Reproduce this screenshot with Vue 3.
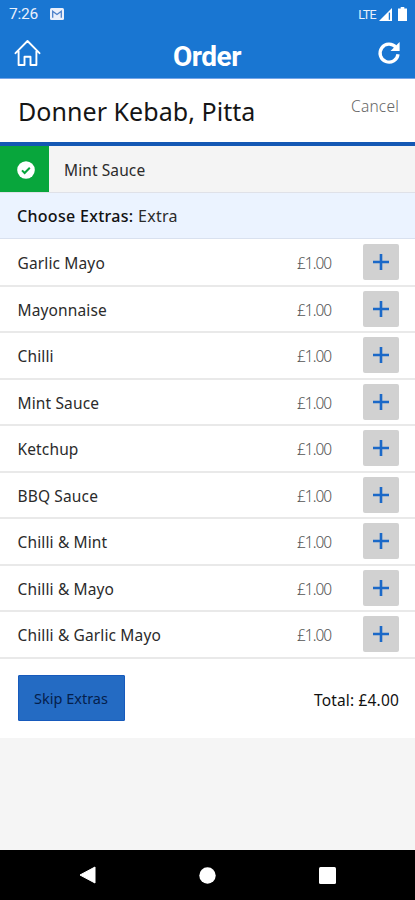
<script setup>
const extras = [
  { name: 'Garlic Mayo', price: '£1.00' },
  { name: 'Mayonnaise', price: '£1.00' },
  { name: 'Chilli', price: '£1.00' },
  { name: 'Mint Sauce', price: '£1.00' },
  { name: 'Ketchup', price: '£1.00' },
  { name: 'BBQ Sauce', price: '£1.00' },
  { name: 'Chilli & Mint', price: '£1.00' },
  { name: 'Chilli & Mayo', price: '£1.00' },
  { name: 'Chilli & Garlic Mayo', price: '£1.00' },
]
</script>

<template>
  <div class="screen">
    <div class="status">
      <span class="time">7:26</span>
      <svg class="mail" width="14" height="12" viewBox="0 0 14 12">
        <rect width="14" height="12" rx="1.5" fill="#e9effb" />
        <path d="M2.7 9.7V3.2L7 6.5l4.3-3.3v6.5" fill="none" stroke="#4b7fc9" stroke-width="1.3" />
      </svg>
      <span class="lte">LTE</span>
      <svg class="signal" width="13" height="13" viewBox="0 0 13 13">
        <path d="M13 0v13H0z" fill="#fff" />
        <path d="M10.4 4.6v7.2" stroke="#1976d2" stroke-width="1.3" />
      </svg>
      <svg class="battery" width="9" height="14" viewBox="0 0 9 14">
        <path d="M2.7 0h3.6v1.6H9V14H0V1.6h2.7z" fill="#fff" />
      </svg>
    </div>

    <header class="bar">
      <svg class="home" width="27" height="28" viewBox="0 0 27 28">
        <path d="M1.5 14.2L13.5 2l12 12.2M4.6 12v14h5.9v-8.3h6V26h5.9V12" fill="none" stroke="#fff" stroke-width="1.9" stroke-linejoin="round" stroke-linecap="round" />
      </svg>
      <h1>Order</h1>
      <svg class="refresh" width="24" height="24" viewBox="0 0 24 24">
        <path d="M18.9 6.3A9 9 0 1 0 21 13.2" fill="none" stroke="#fff" stroke-width="3.3" />
        <path d="M22.6 1v9.1h-9.1z" fill="#fff" />
      </svg>
    </header>

    <section class="title">
      <h2>Donner Kebab, Pitta</h2>
      <span class="cancel">Cancel</span>
    </section>

    <div class="chosen">
      <div class="tick">
        <svg width="18" height="18" viewBox="0 0 18 18">
          <circle cx="9" cy="9" r="8.8" fill="#fff" />
          <path d="M5 9.4l2.6 2.6 5.2-5.3" fill="none" stroke="#08a63c" stroke-width="2" />
        </svg>
      </div>
      <span>Mint Sauce</span>
    </div>

    <div class="choose"><span><b>Choose Extras:</b> Extra</span></div>

    <ul class="list">
      <li v-for="item in extras" :key="item.name">
        <span class="name">{{ item.name }}</span>
        <span class="price">{{ item.price }}</span>
        <button class="add" :aria-label="item.name">
          <svg width="16" height="16" viewBox="0 0 16 16">
            <path d="M8 0v16M0 8h16" stroke="#1b69c8" stroke-width="2.6" />
          </svg>
        </button>
      </li>
    </ul>

    <footer class="foot">
      <button class="skip">Skip Extras</button>
      <span class="total">Total: £4.00</span>
    </footer>

    <nav class="nav">
      <svg width="17" height="18" viewBox="0 0 17 18"><path d="M16 1v16L1 9z" fill="#fff" stroke="#fff" stroke-linejoin="round" /></svg>
      <svg width="17" height="17" viewBox="0 0 17 17"><circle cx="8.5" cy="8.5" r="8.2" fill="#fff" /></svg>
      <svg width="17" height="17" viewBox="0 0 17 17"><rect width="17" height="17" rx="1.5" fill="#fff" /></svg>
    </nav>
  </div>
</template>

<style>
body {
  background: #f5f5f5;
}
</style>

<style scoped>
.screen {
  width: 415px;
  height: 900px;
  display: flex;
  flex-direction: column;
  background: #f5f5f5;
  font-family: "Noto Sans", sans-serif;
  font-size: 15.5px;
  color: #2b2b2b;
  overflow: hidden;
}
.screen * {
  box-sizing: border-box;
}
.status {
  height: 28px;
  flex: none;
  display: flex;
  align-items: center;
  padding: 0 8px 0 9px;
  background: #1976d2;
  font-family: Roboto, sans-serif;
  color: #e9f0fc;
}
.time {
  width: 29px;
  font-size: 15.5px;
  font-weight: 400;
  letter-spacing: -0.2px;
}
.mail {
  margin-left: 12px;
}
.lte {
  margin-left: auto;
  font-size: 12.5px;
  letter-spacing: -0.6px;
}
.signal {
  margin-left: 3px;
}
.battery {
  margin-left: 6px;
}
.bar {
  height: 51px;
  flex: none;
  display: grid;
  grid-template-columns: 27px 1fr 24px;
  padding: 0 14px;
  background: #1976d2;
  border-bottom: 1px solid #75a5e8;
}
.home {
  margin-top: 11px;
}
.refresh {
  margin-top: 13px;
}
h1 {
  margin: 9px 4px 0 0;
  text-align: center;
  font: 700 28px/40px Roboto, sans-serif;
  letter-spacing: -0.45px;
  color: #fff;
}
.title {
  height: 67px;
  flex: none;
  display: flex;
  justify-content: space-between;
  padding: 0 16px 0 18px;
  background: #fff;
  border-bottom: 4px solid #1458b4;
}
h2 {
  margin: 15px 0 0;
  font-size: 25px;
  line-height: 34px;
  font-weight: 400;
  letter-spacing: 0.05px;
  color: #151515;
}
.cancel {
  margin-top: 16px;
  line-height: 22px;
  font-weight: 300;
  letter-spacing: 0.2px;
  color: #666;
}
.chosen {
  height: 47px;
  flex: none;
  display: flex;
  align-items: center;
  gap: 15px;
  background: #f4f4f4;
  border-bottom: 1px solid #dfe1e8;
}
.chosen span {
  padding-top: 1px;
  letter-spacing: 0.1px;
}
.tick {
  width: 49px;
  height: 46px;
  padding: 1px 0 0 2px;
  display: flex;
  align-items: center;
  justify-content: center;
  background: #08a63c;
}
.choose {
  height: 46px;
  flex: none;
  display: flex;
  align-items: center;
  padding: 0 17px;
  background: #ebf3ff;
  border-bottom: 1px solid #d9e1ef;
  font-size: 16px;
  letter-spacing: 0.3px;
}
.choose b {
  font-weight: 500;
  color: #111;
}
.list {
  margin: 0;
  padding: 1px 0 0;
  list-style: none;
  background: #fff;
}
.list li {
  height: 46.5px;
  display: flex;
  align-items: center;
  padding: 0 16px 0 17.5px;
  border-bottom: 2px solid #e9e9e9;
}
.name {
  flex: 1;
  padding-top: 2px;
  letter-spacing: 0.14px;
}
.price {
  width: 66px;
  padding-top: 2px;
  font-weight: 300;
  letter-spacing: -1px;
  color: #555;
}
.add {
  width: 36px;
  height: 36px;
  padding: 0;
  border: 0;
  border-radius: 2px;
  display: flex;
  align-items: center;
  justify-content: center;
  background: #d1d1d1;
}
.foot {
  height: 79.5px;
  flex: none;
  display: flex;
  align-items: center;
  justify-content: space-between;
  padding: 0 16px 0 17.5px;
  background: #fff;
}
.skip {
  width: 107px;
  height: 46px;
  padding: 0;
  border: 1px solid #175abc;
  border-radius: 1px;
  background: #246bc3;
  font: 400 14.5px "Noto Sans", sans-serif;
  color: #04204c;
}
.total {
  margin-top: 4px;
  letter-spacing: 0.17px;
  color: #111;
}
.nav {
  height: 50px;
  flex: none;
  margin-top: auto;
  display: flex;
  align-items: center;
  justify-content: space-between;
  padding: 0 79px;
  background: #000;
}
</style>
